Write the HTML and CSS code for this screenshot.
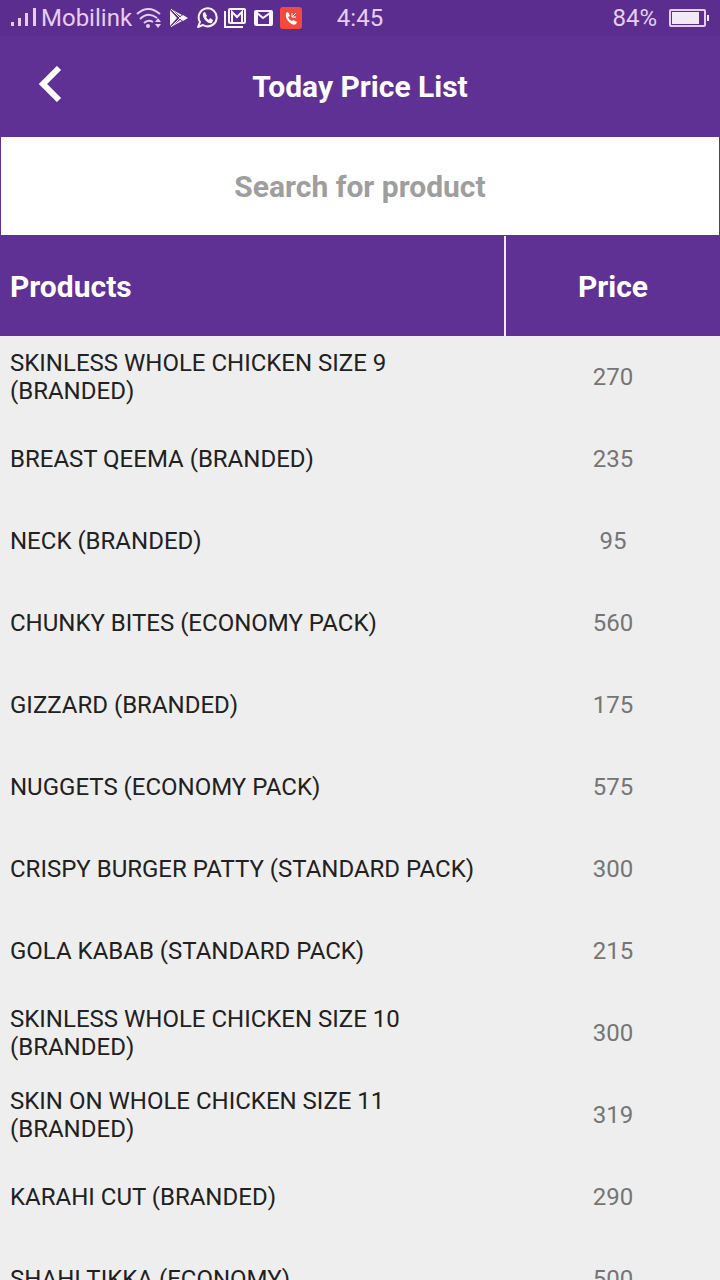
FILE: index.html
```html
<!DOCTYPE html>
<html lang="en">
  <head>
    <meta charset="utf-8">
    <meta name="viewport" content="width=device-width, initial-scale=1">
    <title>Today Price List</title>
    <link rel="stylesheet" href="styles.css">
  </head>
  <body>
    <div class="status-bar">
      <div class="status-left">
        <svg width="26" height="20" viewBox="0 0 26 20" fill="currentColor"><path d="M0 14h3v4H0zM7 10h3v8H7zM14 5h3v13h-3zM22 0h3v18h-3z"/></svg>
        <span>Mobilink</span>
        <svg width="26" height="22" viewBox="0 0 26 22" fill="none" stroke="currentColor" stroke-width="2"><path d="M1 7q11-10 23 0M4 12q8-8 17-1M8 16q4-4 9-1"/><circle cx="12" cy="19" r="2" fill="currentColor" stroke="none"/><path d="M19 15l3-4 3 4zM19 17l3 4 3-4z" fill="currentColor" stroke="none"/></svg>
        <div class="notices">
          <svg width="22" height="22" viewBox="0 0 22 22" fill="currentColor"><path d="M2 3v16l7-8zM3 2l9 7 2-1zM3 20l9-7 2 1zM15 8l5 3-5 3-4-3z"/><path d="M3 2l11 11M3 20L14 9" stroke="currentColor" stroke-width="1"/></svg>
          <svg width="22" height="22" viewBox="0 0 22 22"><path d="M2 20l2-5a9 9 0 1 1 3 3z" fill="none" stroke="currentColor" stroke-width="2" stroke-linejoin="round"/><path d="M7 6l2-1 2 4-1 1q1 2 3 3l1-2 3 2-1 3q-3 1-6-2-4-4-3-8z" fill="currentColor"/></svg>
          <svg width="22" height="22" viewBox="0 0 22 22" fill="none" stroke="currentColor"><path d="M1 4v16h18" stroke-width="2"/><rect x="5" y="2" width="16" height="14" rx="1" stroke-width="2"/><path d="M8 15V5l5 5 5-5v10" stroke-width="2"/></svg>
          <svg width="22" height="22" viewBox="0 0 22 22" fill="none" stroke="currentColor"><rect x="3" y="4" width="17" height="14" rx="1" stroke-width="2"/><path d="M5 17V6l6 5 7-5v11" stroke-width="2"/></svg>
          <svg width="22" height="22" viewBox="0 0 22 22"><rect width="22" height="22" rx="3" fill="#f44a3e"/><path d="M6 6l2-1 2 4-2 1q1 3 4 4l1-1 4 2-1 2q-3 2-7-2-4-4-3-9z" fill="#fff"/><path d="M16 6l-4 4M12 6v4h4" fill="none" stroke="#fff"/></svg>
        </div>
      </div>
      <span>4:45</span>
      <div class="status-right">
        <span>84%</span>
        <svg width="40" height="20" viewBox="0 0 40 20"><rect x="1" y="2" width="35" height="16" rx="1" fill="none" stroke="currentColor" stroke-width="2"/><path d="M3 4h27v12H3zM38 7h2v6h-2z" fill="#f2eaf6"/></svg>
      </div>
    </div>
    <header class="app-bar">
      <button class="back" type="button" aria-label="Back">
        <svg width="24" height="36" viewBox="0 0 24 36" fill="none" stroke="currentColor" stroke-width="6"><path d="M21 2L5 18l16 16"/></svg>
      </button>
      <h1>Today Price List</h1>
    </header>
    <input class="search" type="text" placeholder="Search for product" aria-label="Search for product">
    <main class="list">
      <table class="prices">
        <thead>
          <tr><th class="product" scope="col">Products</th><th class="price" scope="col">Price</th></tr>
        </thead>
        <tbody>
          <tr><td>SKINLESS WHOLE CHICKEN SIZE 9 (BRANDED)</td><td class="price">270</td></tr>
          <tr><td>BREAST QEEMA (BRANDED)</td><td class="price">235</td></tr>
          <tr><td>NECK (BRANDED)</td><td class="price">95</td></tr>
          <tr><td>CHUNKY BITES (ECONOMY PACK)</td><td class="price">560</td></tr>
          <tr><td>GIZZARD (BRANDED)</td><td class="price">175</td></tr>
          <tr><td>NUGGETS (ECONOMY PACK)</td><td class="price">575</td></tr>
          <tr><td>CRISPY BURGER PATTY (STANDARD PACK)</td><td class="price">300</td></tr>
          <tr><td>GOLA KABAB (STANDARD PACK)</td><td class="price">215</td></tr>
          <tr><td>SKINLESS WHOLE CHICKEN SIZE 10 (BRANDED)</td><td class="price">300</td></tr>
          <tr><td>SKIN ON WHOLE CHICKEN SIZE 11 (BRANDED)</td><td class="price">319</td></tr>
          <tr><td>KARAHI CUT (BRANDED)</td><td class="price">290</td></tr>
          <tr><td>SHAHI TIKKA (ECONOMY)</td><td class="price">500</td></tr>
        </tbody>
      </table>
    </main>
  </body>
</html>
```
FILE: styles.css
```css
* {
  box-sizing: border-box;
}
body {
  margin: 0;
  height: 100vh;
  display: flex;
  flex-direction: column;
  background-color: #eee;
  color: #212121;
  font-family: Roboto, sans-serif;
  font-size: 24px;
  line-height: 28px;
}
svg {
  display: block;
  flex: none;
}
.status-bar {
  display: grid;
  grid-template-columns: 1fr auto 1fr;
  align-items: center;
  flex: none;
  height: 36px;
  padding: 0 11px;
  background-color: #5b2d8e;
  color: #e6cdf5;
}
.status-left,
.status-right,
.notices {
  display: flex;
  align-items: center;
}
.status-left {
  gap: 4px;
  white-space: nowrap;
}
.status-right {
  justify-content: flex-end;
  gap: 12px;
}
.notices {
  gap: 6px;
  padding-left: 2px;
  color: #fbf5ff;
}
.app-bar {
  display: grid;
  grid-template-columns: 100px 1fr 100px;
  align-items: center;
  flex: none;
  height: 100px;
  background-color: #603195;
  color: #fff;
}
.app-bar h1 {
  margin: 0;
  padding-top: 2px;
  font-size: 30px;
  line-height: 36px;
  text-align: center;
}
.back {
  display: flex;
  align-items: center;
  justify-content: center;
  height: 100px;
  padding: 0 0 4px;
  border: 0;
  background: none;
  color: #fff;
}
.search {
  flex: none;
  width: 100%;
  height: 100px;
  padding: 0 10px;
  border: 1px solid #603195;
  border-radius: 0;
  background-color: #fff;
  color: #212121;
  font: bold 30px Roboto, sans-serif;
  text-align: center;
}
.search::placeholder {
  color: #9e9e9e;
}
.list {
  flex: 1;
  min-height: 0;
  overflow-y: auto;
  scrollbar-width: none;
}
.prices {
  width: 100%;
  table-layout: fixed;
  border-collapse: separate;
  border-spacing: 0;
}
.prices th {
  position: sticky;
  top: 0;
  height: 100px;
  padding: 2px 10px 0;
  background-color: #603195;
  color: #fff;
  font-size: 30px;
  text-align: left;
}
.prices td {
  height: 82px;
  padding: 0 10px;
}
.prices .product {
  width: 70%;
}
.prices .price {
  width: 30%;
  border-left: 2px solid transparent;
  text-align: center;
}
.prices th.price {
  border-left-color: #f3e6fa;
}
.prices td.price {
  color: #757575;
}
```
